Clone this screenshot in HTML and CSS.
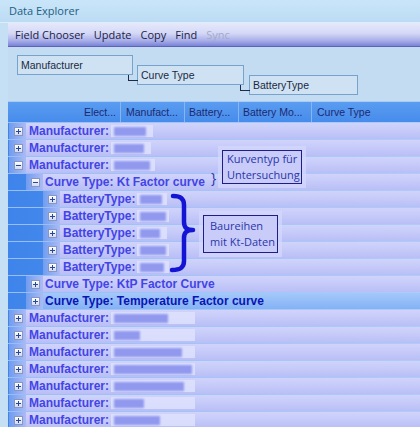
FILE: index.html
```html
<!DOCTYPE html>
<html>
<head>
<meta charset="utf-8">
<link rel="stylesheet" href="styles.css">
</head>
<body>
<div class="titlebar">Data Explorer</div>
<div class="frame">
  <div class="menubar">
    <span>Field Chooser</span><span>Update</span><span>Copy</span><span>Find</span><span class="disabled">Sync</span>
  </div>
  <div class="groupbar">
    <div class="gbox g1">Manufacturer</div>
    <div class="gbox g2">Curve Type</div>
    <div class="gbox g3">BatteryType</div>
  </div>
  <div class="grid">
    <div class="header">
      <div class="col c1">Elect...</div>
      <div class="col c2">Manufact...</div>
      <div class="col c3">Battery...</div>
      <div class="col c4">Battery Mo...</div>
      <div class="col c5">Curve Type</div>
    </div>
    <div class="rows">
      <div class="row l0"><div class="indent"></div><div class="exp"><span class="btn plus"></span></div><div class="cell">Manufacturer:<span class="val" style="width:42px"><span class="blot" style="width:32px"></span></span></div></div>
      <div class="row l0"><div class="indent"></div><div class="exp"><span class="btn plus"></span></div><div class="cell">Manufacturer:<span class="val" style="width:40px"><span class="blot" style="width:30px"></span></span></div></div>
      <div class="row l0"><div class="indent"></div><div class="exp"><span class="btn"></span></div><div class="cell">Manufacturer:<span class="val" style="width:44px"><span class="blot" style="width:36px"></span></span></div></div>
      <div class="row l1"><div class="indent"></div><div class="exp"><span class="btn"></span></div><div class="cell">Curve Type: Kt Factor curve</div></div>
      <div class="row l2"><div class="indent"></div><div class="exp"><span class="btn plus"></span></div><div class="cell">BatteryType:<span class="val" style="width:30px"><span class="blot" style="width:22px"></span></span></div></div>
      <div class="row l2"><div class="indent"></div><div class="exp"><span class="btn plus"></span></div><div class="cell">BatteryType:<span class="val" style="width:32px"><span class="blot" style="width:26px"></span></span></div></div>
      <div class="row l2"><div class="indent"></div><div class="exp"><span class="btn plus"></span></div><div class="cell">BatteryType:<span class="val" style="width:30px"><span class="blot" style="width:20px"></span></span></div></div>
      <div class="row l2"><div class="indent"></div><div class="exp"><span class="btn plus"></span></div><div class="cell">BatteryType:<span class="val" style="width:32px"><span class="blot" style="width:26px"></span></span></div></div>
      <div class="row l2"><div class="indent"></div><div class="exp"><span class="btn plus"></span></div><div class="cell">BatteryType:<span class="val" style="width:32px"><span class="blot" style="width:24px"></span></span></div></div>
      <div class="row l1"><div class="indent"></div><div class="exp"><span class="btn plus"></span></div><div class="cell">Curve Type: KtP Factor Curve</div></div>
      <div class="row l1 sel"><div class="indent"></div><div class="exp"><span class="btn plus"></span></div><div class="cell">Curve Type: Temperature Factor curve</div></div>
      <div class="row l0"><div class="indent"></div><div class="exp"><span class="btn plus"></span></div><div class="cell">Manufacturer:<span class="val" style="width:84px"><span class="blot" style="width:54px"></span></span></div></div>
      <div class="row l0"><div class="indent"></div><div class="exp"><span class="btn plus"></span></div><div class="cell">Manufacturer:<span class="val" style="width:84px"><span class="blot" style="width:26px"></span></span></div></div>
      <div class="row l0"><div class="indent"></div><div class="exp"><span class="btn plus"></span></div><div class="cell">Manufacturer:<span class="val" style="width:84px"><span class="blot" style="width:68px"></span></span></div></div>
      <div class="row l0"><div class="indent"></div><div class="exp"><span class="btn plus"></span></div><div class="cell">Manufacturer:<span class="val" style="width:84px"><span class="blot" style="width:78px"></span></span></div></div>
      <div class="row l0"><div class="indent"></div><div class="exp"><span class="btn plus"></span></div><div class="cell">Manufacturer:<span class="val" style="width:84px"><span class="blot" style="width:70px"></span></span></div></div>
      <div class="row l0"><div class="indent"></div><div class="exp"><span class="btn plus"></span></div><div class="cell">Manufacturer:<span class="val" style="width:84px"><span class="blot" style="width:30px"></span></span></div></div>
      <div class="row l0"><div class="indent"></div><div class="exp"><span class="btn plus"></span></div><div class="cell">Manufacturer:<span class="val" style="width:84px"><span class="blot" style="width:46px"></span></span></div></div>
    </div>
    <div class="note note1">Kurventyp für<br>Untersuchung</div>
    <div class="smallbrace">}</div>
    <svg class="bigbrace" width="32" height="82" viewBox="0 0 32 82">
      <path d="M4 3 C11 3 15 5 15 12 L15 29 C15 35 18 37 24 37 C18 37 15 39 15 45 L15 68 C15 75 11 77 3 77" fill="none" stroke="#1414d4" stroke-width="4.5" stroke-linecap="round" stroke-linejoin="round"/>
    </svg>
    <div class="note note2">Baureihen<br>mit Kt-Daten</div>
  </div>
</div>
</body>
</html>
```

FILE: styles.css
```css
html, body {
  margin: 0;
  padding: 0;
}
body {
  width: 420px;
  height: 427px;
  overflow: hidden;
  background: #c5e0f5;
  font-family: "Liberation Sans", Arial, sans-serif;
}
.titlebar {
  height: 23px;
  box-sizing: border-box;
  padding-left: 9px;
  line-height: 22px;
  font-family: "Open Sans", "Noto Sans", sans-serif;
  font-size: 11px;
  color: #22607f;
  background: linear-gradient(#c9e5f9, #bcdcf4);
  border-bottom: 1px solid #dcedfb;
}
.frame {
  padding-left: 8px;
}
.menubar {
  height: 24px;
  box-sizing: border-box;
  display: flex;
  align-items: center;
  gap: 9px;
  padding-left: 7px;
  font-family: "Open Sans", "Noto Sans", sans-serif;
  font-size: 11px;
  color: #1b2244;
  background: linear-gradient(#e6e9fb, #d4d8f6 45%, #a6ace7 78%, #7a82d6);
  border-bottom: 1px solid #5c64ba;
}
.menubar .disabled {
  color: #a4aac8;
}
.groupbar {
  height: 54px;
  display: flex;
  align-items: flex-start;
  gap: 4px;
  padding-left: 9px;
  background: #c4dcf1;
}
.gbox {
  position: relative;
  height: 20px;
  box-sizing: border-box;
  border: 1px solid #76a2cc;
  background: #cfe2f4;
  padding-left: 3px;
  font-size: 10.5px;
  line-height: 18px;
  color: #1a2a40;
}
.g1 { width: 116px; margin-top: 8px; }
.g2 { width: 107px; margin-top: 18px; }
.g3 { width: 109px; margin-top: 28px; margin-left: 1px; }
.g2::before, .g3::before {
  content: "";
  position: absolute;
  left: -10px;
  top: 9px;
  width: 9px;
  height: 5px;
  border-left: 1px solid #1c2c48;
  border-bottom: 1px solid #1c2c48;
}
.grid {
  position: relative;
  background: linear-gradient(to right, #3e84ea, #70a8f2);
}
.header {
  height: 21px;
  box-sizing: border-box;
  display: flex;
  border-top: 1px solid #a8ccf4;
  background: linear-gradient(#5a9cf0, #468cec);
  font-size: 10.5px;
  line-height: 20px;
  color: #1c2a70;
  white-space: nowrap;
}
.col {
  box-sizing: border-box;
  border-right: 1px solid #86b6f2;
  padding-left: 5px;
  overflow: hidden;
}
.c1 { width: 113px; text-align: right; padding-right: 4px; }
.c2 { width: 64px; }
.c3 { width: 54px; padding-left: 4px; }
.c4 { width: 73px; padding-left: 4px; }
.c5 { flex: 1; border-right: none; }
.row {
  display: flex;
  height: 17px;
  box-sizing: border-box;
  padding-left: 1px;
  border-top: 1px solid rgba(214, 228, 255, 0.6);
}
.indent { flex: none; }
.l1 .indent { width: 17px; }
.l2 .indent { width: 34px; }
.exp {
  flex: none;
  width: 17px;
  display: flex;
  align-items: center;
  background: linear-gradient(to right, rgba(150, 176, 244, 0.55), rgba(184, 192, 246, 0.9));
}
.btn {
  position: relative;
  width: 9px;
  height: 9px;
  margin-left: 5px;
  box-sizing: border-box;
  border: 1px solid #8797c4;
  background: linear-gradient(#ffffff, #d2d9ef);
}
.btn::before {
  content: "";
  position: absolute;
  left: 1px;
  right: 1px;
  top: 3px;
  height: 1px;
  background: #27479c;
}
.btn.plus::after {
  content: "";
  position: absolute;
  top: 1px;
  bottom: 1px;
  left: 3px;
  width: 1px;
  background: #27479c;
}
.cell {
  flex: 1;
  padding-left: 3px;
  background: linear-gradient(#d0d4fb, #b9bff6);
  font-weight: bold;
  font-size: 12px;
  line-height: 16px;
  color: #4444e6;
  white-space: nowrap;
  overflow: hidden;
}
.l1 .cell { padding-left: 2px; }
.sel .cell {
  background: linear-gradient(#a4c8fa, #84b2f5);
  color: #0a16b4;
}
.val {
  display: inline-block;
  vertical-align: -2px;
  height: 12px;
  margin-left: 2px;
  background: rgba(222, 226, 253, 0.85);
}
.blot {
  display: block;
  height: 9px;
  margin: 2px 0 0 3px;
  background: #858ded;
  opacity: 0.85;
  filter: blur(1.2px);
}
.note {
  position: absolute;
  box-sizing: border-box;
  border: 1px solid #1e1e86;
  background: #c9ccf9;
  box-shadow: 0 0 0 4px rgba(214, 217, 252, 0.7);
  font-family: "Open Sans", "Noto Sans", sans-serif;
  font-size: 11px;
  line-height: 16px;
  color: #2a36aa;
  white-space: nowrap;
}
.note1 {
  left: 214px;
  top: 49px;
  width: 80px;
  height: 34px;
  padding: 0 0 0 4px;
}
.note2 {
  left: 195px;
  top: 114px;
  width: 75px;
  height: 38px;
  padding: 2px 0 0 6px;
}
.smallbrace {
  position: absolute;
  left: 203px;
  top: 68px;
  font-family: "Open Sans", "Noto Sans", sans-serif;
  font-size: 14px;
  line-height: 18px;
  color: #2a36aa;
}
.bigbrace {
  position: absolute;
  left: 161px;
  top: 92px;
}
```
